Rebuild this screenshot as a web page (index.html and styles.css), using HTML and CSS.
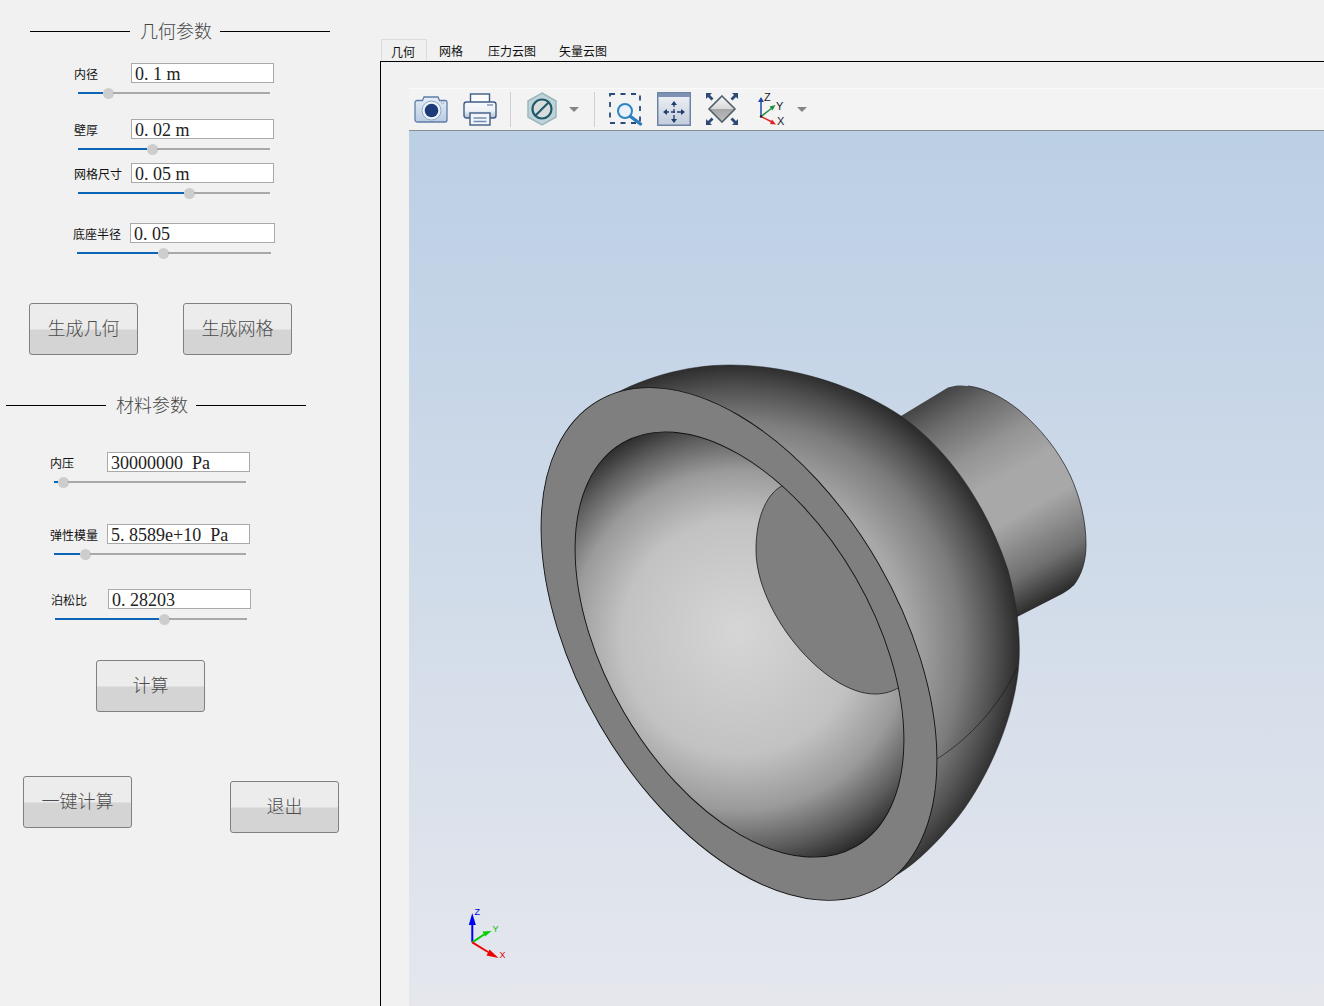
FILE: index.html
```html
<!DOCTYPE html>
<html lang="zh">
<head>
<meta charset="utf-8">
<title>几何参数</title>
<link rel="stylesheet" href="styles.css">
</head>
<body>
<div class="app">
  <aside class="sidebar">
    <div class="section-title st-geo"><span class="rule rule-a"></span><span class="st-text">几何参数</span><span class="rule rule-b"></span></div>

    <div class="field f-inner">
      <div class="field-row"><label class="lbl">内径</label><div class="num">0. 1 m</div></div>
      <div class="slider"><span class="fill" style="width:25px"></span><span class="knob"></span><span class="rest"></span></div>
    </div>
    <div class="field f-wall">
      <div class="field-row"><label class="lbl">壁厚</label><div class="num">0. 02 m</div></div>
      <div class="slider"><span class="fill" style="width:69px"></span><span class="knob"></span><span class="rest"></span></div>
    </div>
    <div class="field f-mesh">
      <div class="field-row"><label class="lbl">网格尺寸</label><div class="num">0. 05 m</div></div>
      <div class="slider"><span class="fill" style="width:106px"></span><span class="knob"></span><span class="rest"></span></div>
    </div>
    <div class="field f-base">
      <div class="field-row"><label class="lbl">底座半径</label><div class="num">0. 05</div></div>
      <div class="slider"><span class="fill" style="width:81px"></span><span class="knob"></span><span class="rest"></span></div>
    </div>

    <div class="btn-row br-geo">
      <button class="btn">生成几何</button>
      <button class="btn">生成网格</button>
    </div>

    <div class="section-title st-mat"><span class="rule rule-a"></span><span class="st-text">材料参数</span><span class="rule rule-b"></span></div>

    <div class="field f-press">
      <div class="field-row"><label class="lbl">内压</label><div class="num">30000000  Pa</div></div>
      <div class="slider"><span class="fill" style="width:4px"></span><span class="knob"></span><span class="rest"></span></div>
    </div>
    <div class="field f-mod">
      <div class="field-row"><label class="lbl">弹性模量</label><div class="num">5. 8589e+10  Pa</div></div>
      <div class="slider"><span class="fill" style="width:26px"></span><span class="knob"></span><span class="rest"></span></div>
    </div>
    <div class="field f-poi">
      <div class="field-row"><label class="lbl">泊松比</label><div class="num">0. 28203</div></div>
      <div class="slider"><span class="fill" style="width:104px"></span><span class="knob"></span><span class="rest"></span></div>
    </div>

    <div class="btn-row br-calc"><button class="btn">计算</button></div>
    <div class="btn-row br-end">
      <button class="btn">一键计算</button>
      <button class="btn btn-exit">退出</button>
    </div>
  </aside>

  <main class="workspace">
    <nav class="tabs">
      <span class="tab tab-active">几何</span>
      <span class="tab">网格</span>
      <span class="tab">压力云图</span>
      <span class="tab">矢量云图</span>
    </nav>
    <div class="tab-body">
      <section class="viewer">
        <div class="toolbar">
          <svg class="ico" viewBox="0 0 34 34">
            <defs><linearGradient id="gCam" x1="0" y1="0" x2="0" y2="1"><stop offset="0" stop-color="#e6eef8"/><stop offset="1" stop-color="#b9cbe3"/></linearGradient></defs>
            <path d="M3 8.5h5.500l1.500-3.500h14l1.500 3.500H31a2 2 0 0 1 2 2V28a2 2 0 0 1-2 2H3a2 2 0 0 1-2-2V10.500a2 2 0 0 1 2-2z" fill="url(#gCam)" stroke="#5f7ea6" stroke-width="1.300"/>
            <circle cx="17.500" cy="18.500" r="9.500" fill="#eef3f9" stroke="#8ea5c4"/>
            <circle cx="17.500" cy="18.500" r="6.800" fill="#1d3b78"/>
            <circle cx="28.500" cy="10.500" r="1.200" fill="#fff" stroke="#6b88ad" stroke-width=".6"/>
          </svg>
          <svg class="ico ml15" viewBox="0 0 34 34">
            <defs><linearGradient id="gPr" x1="0" y1="0" x2="0" y2="1"><stop offset="0" stop-color="#f8f9fb"/><stop offset=".55" stop-color="#eef1f6"/><stop offset="1" stop-color="#aebdd3"/></linearGradient></defs>
            <rect x="7.500" y="2" width="19" height="10" fill="#fbfbfb" stroke="#3f5d86" stroke-width="1.400"/>
            <rect x="1" y="10" width="32" height="16" rx="2.500" fill="url(#gPr)" stroke="#3f5d86" stroke-width="1.400"/>
            <path d="M24 13h6" stroke="#7f93ad" stroke-width="1.400"/>
            <rect x="7" y="21" width="20" height="12" fill="#f2f4f8" stroke="#3f5d86" stroke-width="1.400"/>
            <path d="M10.500 26h13M10.500 29.500h13" stroke="#6f8fb5" stroke-width="1.400"/>
          </svg>
          <span class="sep ml13"></span>
          <svg class="ico ml14" viewBox="0 0 34 34">
            <polygon points="17,1 31,9 31,25 17,33 3,25 3,9" fill="#c0d3d8" stroke="#9cb7be" stroke-width="1.500"/>
            <circle cx="17" cy="17" r="9.500" fill="#d8dcdc" stroke="#1e5a6b" stroke-width="2.200"/>
            <path d="M10.500 23.500L23.500 10.500" stroke="#1e5a6b" stroke-width="2.200"/>
          </svg>
          <svg class="caret ml10" viewBox="0 0 10 5"><polygon points="0,0 10,0 5,5" fill="#858585"/></svg>
          <span class="sep ml15"></span>
          <svg class="ico ml14" viewBox="0 0 34 34">
            <rect x="1" y="2" width="30" height="29" fill="none" stroke="#2c4a7c" stroke-width="1.800" stroke-dasharray="5 5.500"/>
            <circle cx="16" cy="19" r="7" fill="#eaf1f8" stroke="#2d86c3" stroke-width="2"/>
            <path d="M21.500 24.500L31.500 32" stroke="#2b7dbf" stroke-width="3.400" stroke-linecap="round"/>
          </svg>
          <svg class="ico ml14" viewBox="0 0 34 34">
            <defs><linearGradient id="gFr" x1="0" y1="0" x2="0" y2="1"><stop offset="0" stop-color="#f1f3f7"/><stop offset="1" stop-color="#c2ccdb"/></linearGradient></defs>
            <rect x=".75" y=".75" width="32.500" height="32.500" fill="url(#gFr)" stroke="#6d83a6" stroke-width="1.500"/>
            <rect x="1" y="1" width="32" height="4" fill="#7d92b3"/>
            <path d="M17 11v18M8 20h18" stroke="#1f3d6d" stroke-width="1.300" stroke-dasharray="4 2"/>
            <path d="M17 9l-3 4h6zM17 31l-3-4h6zM6 20l4-3v6zM28 20l-4-3v6z" fill="#1f3d6d"/>
          </svg>
          <svg class="ico ml14" viewBox="0 0 34 34">
            <defs><linearGradient id="gFit" x1="0" y1="0" x2="0" y2="1"><stop offset="0" stop-color="#f6f6f6"/><stop offset=".5" stop-color="#d8d8d8"/><stop offset=".5" stop-color="#a6a6a6"/><stop offset="1" stop-color="#c0c0c0"/></linearGradient></defs>
            <polygon points="17,4 30,17 17,30 4,17" fill="url(#gFit)" stroke="#55606e" stroke-width="1.600"/>
            <path d="M1 1h6l-2 2 3.500 3.500-2 2L3 5l-2 2zM33 1h-6l2 2-3.500 3.500 2 2L31 5l2 2zM1 33h6l-2-2 3.500-3.500-2-2L3 29l-2-2zM33 33h-6l2-2-3.500-3.500 2-2L31 29l2-2z" fill="#2c4a75"/>
          </svg>
          <svg class="ico ml16" viewBox="0 0 34 34">
            <path d="M6 24.500V9" stroke="#2148a8" stroke-width="1.500"/><path d="M6 5l-3 5h6z" fill="#2148a8"/>
            <path d="M6 24.500L17 16" stroke="#1f8f3f" stroke-width="1.500"/><path d="M20.500 13l-6 1.500 3 4z" fill="#1f8f3f"/>
            <path d="M6 24.500L17 30" stroke="#e02020" stroke-width="1.500"/><path d="M21 32.500l-6-.5 2-4.500z" fill="#e02020"/>
            <circle cx="6" cy="24.500" r="1.200" fill="#222"/>
            <text class="triad-t" x="9" y="9">Z</text><text class="triad-t" x="21" y="18">Y</text><text class="triad-t" x="22" y="33">X</text>
          </svg>
          <svg class="caret ml8" viewBox="0 0 10 5"><polygon points="0,0 10,0 5,5" fill="#858585"/></svg>
        </div>
        <div class="viewport">
          <svg class="scene" viewBox="409 131 915 875">
            <defs>
              <linearGradient id="gStub" gradientUnits="userSpaceOnUse" x1="948" y1="388" x2="1063" y2="592">
                <stop offset="0" stop-color="#444"/><stop offset=".12" stop-color="#6a6a6a"/><stop offset=".3" stop-color="#949494"/><stop offset=".45" stop-color="#a8a8a8"/><stop offset=".62" stop-color="#a8a8a8"/><stop offset=".85" stop-color="#707070"/><stop offset="1" stop-color="#2c2c2c"/>
              </linearGradient>
              <radialGradient id="gDome" gradientUnits="userSpaceOnUse" cx="735" cy="648" r="288">
                <stop offset="0" stop-color="#b0b0b0"/><stop offset=".6" stop-color="#a8a8a8"/><stop offset=".79" stop-color="#7c7c7c"/><stop offset=".9" stop-color="#525252"/><stop offset="1" stop-color="#262626"/>
              </radialGradient>
              <radialGradient id="gBowl" gradientUnits="userSpaceOnUse" cx="739" cy="644" r="236" fx="727" fy="638">
                <stop offset="0" stop-color="#d6d6d6"/><stop offset=".5" stop-color="#c2c2c2"/><stop offset=".72" stop-color="#9a9a9a"/><stop offset=".88" stop-color="#5c5c5c"/><stop offset="1" stop-color="#262626"/>
              </radialGradient>
              <clipPath id="cBowl"><ellipse cx="739.500" cy="644.500" rx="233" ry="134" transform="rotate(60 739.500 644.500)"/></clipPath>
            </defs>
            <path d="M901 416L948 387.500C955 385 962 385 968 386C985 388 1003 397 1020 411C1040 428 1058 450 1070 475C1080 497 1086 520 1086 545C1086 560 1082 575 1073 586C1069 590 1065 592 1062 594L1017 617L900 600Z" fill="url(#gStub)"/>
            <path d="M968 386C985 388 1003 397 1020 411C1040 428 1058 450 1070 475C1080 497 1086 520 1086 545C1086 560 1082 575 1073 586" fill="none" stroke="#1a1a1a" stroke-width=".7"/>
            <path d="M600 402C640 378 685 365 730 365C790 365 855 385 901 416C945 447 985 500 1008 570C1019 610 1022 650 1017 680C1008 740 975 800 948 829C930 850 910 868 893 877L739 644Z" fill="url(#gDome)" stroke="#222" stroke-width=".5"/>
            <path d="M937 759C970 738 1000 705 1017 668" fill="none" stroke="#1a1a1a" stroke-width=".7"/>
            <ellipse cx="739" cy="644" rx="281" ry="161" transform="rotate(60 739 644)" fill="#7f7f7f" stroke="#111" stroke-width=".9"/>
            <ellipse cx="739.500" cy="644.500" rx="233" ry="134" transform="rotate(60 739.500 644.500)" fill="url(#gBowl)"/>
            <g clip-path="url(#cBowl)">
              <path d="M782 486C768 493 756 515 756 550C756 612 824 694 875 694C885 694 893 691 899 687.500L960 690L900 480Z" fill="#7f7f7f"/>
              <path d="M782 486C768 493 756 515 756 550C756 612 824 694 875 694C885 694 893 691 899 687.500" fill="none" stroke="#1a1a1a" stroke-width=".8"/>
            </g>
            <ellipse cx="739.500" cy="644.500" rx="233" ry="134" transform="rotate(60 739.500 644.500)" fill="none" stroke="#111" stroke-width=".9"/>
            <path d="M472.300 942.300V922" stroke="#0000f0" stroke-width="2"/><path d="M472.300 913l-3.500 12h7z" fill="#0000f0"/>
            <path d="M472.300 942.300L484 934.500" stroke="#00d000" stroke-width="2"/><path d="M491.500 931l-9 .5 2.500 5z" fill="#00d000"/>
            <path d="M472.300 942.300L488 952" stroke="#f00000" stroke-width="2"/><path d="M498.500 958l-12-2.500 3-6z" fill="#f00000"/>
            <text class="axis-t axis-z" x="474.500" y="914.500">Z</text>
            <text class="axis-t axis-y" x="492.500" y="931.500">Y</text>
            <text class="axis-t axis-x" x="499.500" y="958">X</text>
          </svg>
        </div>
      </section>
    </div>
  </main>
</div>
</body>
</html>
```
FILE: styles.css
```css
* { box-sizing: border-box; }
html, body { margin: 0; padding: 0; }
body {
  width: 1324px;
  height: 1006px;
  overflow: hidden;
  background: #f1f1f1;
  font-family: "Noto Sans CJK SC", "Liberation Sans", sans-serif;
}
.app { display: grid; grid-template-columns: 380px 944px; height: 1006px; }

/* left panel */
.sidebar { padding-top: 21px; }
.section-title { display: flex; align-items: center; height: 20px; }
.st-geo { margin-left: 30px; }
.st-mat { margin-left: 6px; margin-top: 40px; }
.rule { display: block; height: 1px; background: #000; }
.rule-a { width: 100px; margin-right: 10px; }
.rule-b { width: 110px; margin-left: 8px; }
.st-text { font-size: 18px; line-height: 20px; font-weight: 300; color: #444; margin-bottom: 3px; }

.field-row { display: flex; align-items: center; height: 20px; }
.lbl { font-size: 12px; line-height: 20px; height: 20px; padding-top: 1px; color: #111; width: 57px; white-space: nowrap; }
.num {
  width: 143px;
  height: 20px;
  border: 1px solid #a9a9a9;
  background: #fff;
  padding-left: 3px;
  font-family: "Liberation Serif", serif;
  font-size: 18px;
  line-height: 21px;
  color: #222;
  white-space: pre;
}
.slider { display: flex; align-items: center; height: 10px; width: 192px; margin: 5px 0 0 4px; }
.fill { height: 2px; background: #0b64b5; }
.knob { width: 11px; height: 11px; margin: 0 -.5px; border-radius: 50%; background: #cdcdcd; flex: none; }
.rest { flex: 1; height: 2px; background: #a9a9a9; }

.f-inner { margin: 22px 0 0 74px; }
.f-wall { margin: 21px 0 0 74px; }
.f-mesh { margin: 9px 0 0 74px; }
.f-base { margin: 25px 0 0 73px; }
.f-base .num { width: 145px; }
.f-base .slider { width: 194px; }
.f-press { margin: 37px 0 0 50px; }
.f-mod { margin: 37px 0 0 50px; }
.f-poi { margin: 30px 0 0 51px; }

.btn-row { display: flex; align-items: flex-start; }
.br-geo { margin: 45px 0 0 29px; gap: 45px; }
.br-calc { margin: 36px 0 0 96px; }
.br-end { margin: 64px 0 0 23px; gap: 98px; }
.btn {
  width: 109px;
  height: 52px;
  padding: 0 0 4px;
  border: 1px solid #808080;
  border-radius: 3px;
  background: linear-gradient(#ececec 0, #ececec 50%, #d4d4d4 52%, #d4d4d4 100%);
  font-family: "Noto Sans CJK SC", sans-serif;
  font-size: 18px;
  font-weight: 300;
  color: #4c4c4c;
}
.btn-exit { margin-top: 5px; }

/* right pane */
.workspace { display: flex; flex-direction: column; height: 1006px; }
.tabs {
  display: flex;
  align-items: flex-end;
  height: 62px;
  padding-left: 1px;
  border-bottom: 1px solid #000;
}
.tab { padding: 1px 12px 0; height: 22px; font-size: 12px; line-height: 22px; color: #111; white-space: nowrap; }
.tab:nth-child(3) { padding-left: 13px; }
.tab:nth-child(4) { padding-left: 11px; }
.tab-active {
  padding: 1px 11px 0 9px;
  border: 1px solid #dcdcdc;
  border-bottom: 0;
  background: #f0f0f0;
}
.tab-body { flex: 1; min-height: 0; display: flex; border-left: 1px solid #000; padding: 26px 0 0 28px; }
.viewer { flex: 1; display: flex; flex-direction: column; }
.toolbar {
  display: flex;
  align-items: center;
  height: 43px;
  padding: 0 0 1px 5px;
  background: #f3f3f3;
  border-top: 1px solid #fafafa;
  border-bottom: 1px solid #8c8c8c;
}
.ico { width: 34px; height: 34px; flex: none; overflow: visible; }
.caret { width: 10px; height: 5px; flex: none; }
.sep { width: 1px; height: 35px; background: #cfcfcf; flex: none; }
.ml8 { margin-left: 8px; }
.ml10 { margin-left: 10px; }
.ml13 { margin-left: 13px; }
.ml14 { margin-left: 14px; }
.ml15 { margin-left: 15px; }
.ml16 { margin-left: 16px; }
.triad-t { font-family: "Liberation Sans", sans-serif; font-size: 11px; fill: #222; }

.viewport { flex: 1; min-height: 0; background: linear-gradient(#bbcfe5, #e5e7ed); }
.scene { display: block; width: 915px; height: 875px; }
.axis-t { font-family: "Liberation Sans", sans-serif; font-size: 9px; }
.axis-z { fill: #0000e0; }
.axis-y { fill: #00c000; }
.axis-x { fill: #e00000; }
```
